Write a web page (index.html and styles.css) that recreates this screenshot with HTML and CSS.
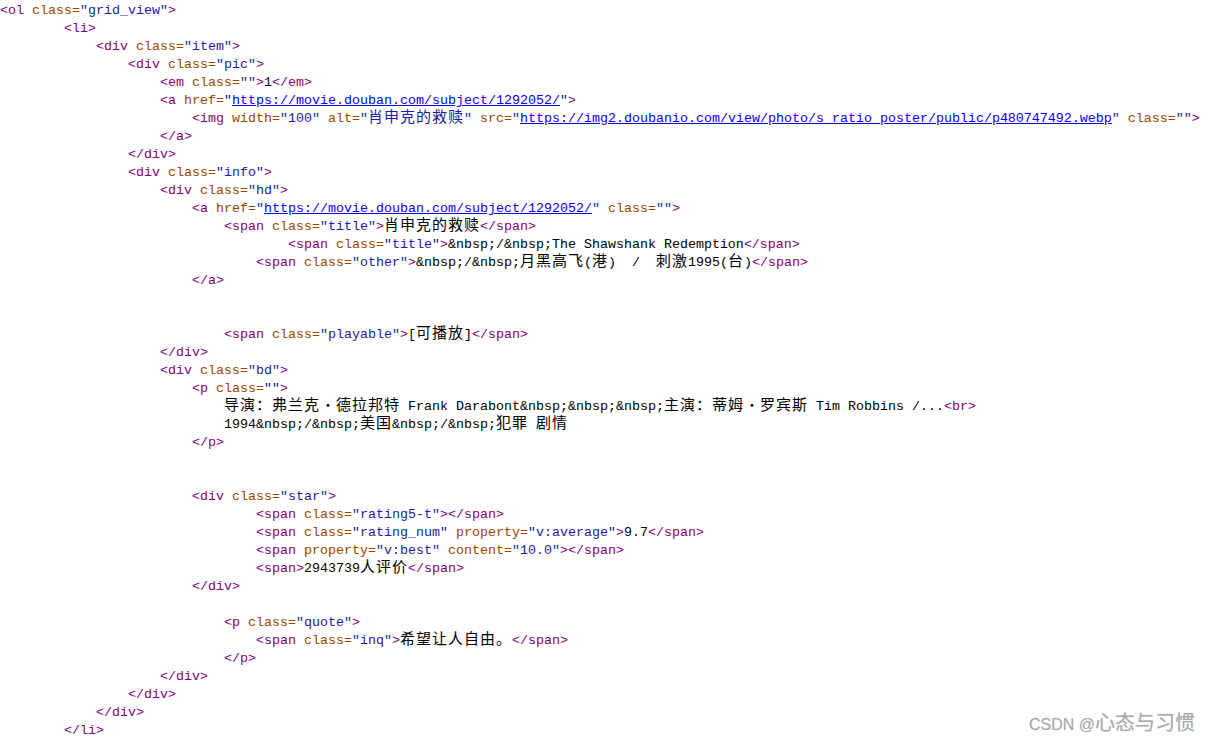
FILE: index.html
```html
<!DOCTYPE html>
<html lang="zh">
<head>
  <meta charset="UTF-8">
  <title>view-source</title>
  <link rel="stylesheet" href="styles.css">
</head>
<body>

<div class="src">
<div class="ln"><span class="t">&lt;ol </span><span class="n">class=</span><span class="v">"grid_view"</span><span class="t">&gt;</span></div>
<div class="ln">        <span class="t">&lt;li&gt;</span></div>
<div class="ln">            <span class="t">&lt;div </span><span class="n">class=</span><span class="v">"item"</span><span class="t">&gt;</span></div>
<div class="ln">                <span class="t">&lt;div </span><span class="n">class=</span><span class="v">"pic"</span><span class="t">&gt;</span></div>
<div class="ln">                    <span class="t">&lt;em </span><span class="n">class=</span><span class="v">""</span><span class="t">&gt;</span>1<span class="t">&lt;/em&gt;</span></div>
<div class="ln">                    <span class="t">&lt;a </span><span class="n">href=</span><span class="v">"<span class="u">https://movie.douban.com/subject/1292052/</span>"</span><span class="t">&gt;</span></div>
<div class="ln">                        <span class="t">&lt;img </span><span class="n">width=</span><span class="v">"100"</span> <span class="n">alt=</span><span class="v">"<span class="w">肖申克的救赎</span>"</span> <span class="n">src=</span><span class="v">"<span class="u">https://img2.doubanio.com/view/photo/s_ratio_poster/public/p480747492.webp</span>"</span> <span class="n">class=</span><span class="v">""</span><span class="t">&gt;</span></div>
<div class="ln">                    <span class="t">&lt;/a&gt;</span></div>
<div class="ln">                <span class="t">&lt;/div&gt;</span></div>
<div class="ln">                <span class="t">&lt;div </span><span class="n">class=</span><span class="v">"info"</span><span class="t">&gt;</span></div>
<div class="ln">                    <span class="t">&lt;div </span><span class="n">class=</span><span class="v">"hd"</span><span class="t">&gt;</span></div>
<div class="ln">                        <span class="t">&lt;a </span><span class="n">href=</span><span class="v">"<span class="u">https://movie.douban.com/subject/1292052/</span>"</span> <span class="n">class=</span><span class="v">""</span><span class="t">&gt;</span></div>
<div class="ln">                            <span class="t">&lt;span </span><span class="n">class=</span><span class="v">"title"</span><span class="t">&gt;</span><span class="w">肖申克的救赎</span><span class="t">&lt;/span&gt;</span></div>
<div class="ln">                                    <span class="t">&lt;span </span><span class="n">class=</span><span class="v">"title"</span><span class="t">&gt;</span>&amp;nbsp;/&amp;nbsp;The Shawshank Redemption<span class="t">&lt;/span&gt;</span></div>
<div class="ln">                                <span class="t">&lt;span </span><span class="n">class=</span><span class="v">"other"</span><span class="t">&gt;</span>&amp;nbsp;/&amp;nbsp;<span class="w">月黑高飞</span>(<span class="w">港</span>)  /  <span class="w">刺激</span>1995(<span class="w">台</span>)<span class="t">&lt;/span&gt;</span></div>
<div class="ln">                        <span class="t">&lt;/a&gt;</span></div>
<div class="ln"> </div>
<div class="ln"> </div>
<div class="ln">                            <span class="t">&lt;span </span><span class="n">class=</span><span class="v">"playable"</span><span class="t">&gt;</span>[<span class="w">可播放</span>]<span class="t">&lt;/span&gt;</span></div>
<div class="ln">                    <span class="t">&lt;/div&gt;</span></div>
<div class="ln">                    <span class="t">&lt;div </span><span class="n">class=</span><span class="v">"bd"</span><span class="t">&gt;</span></div>
<div class="ln">                        <span class="t">&lt;p </span><span class="n">class=</span><span class="v">""</span><span class="t">&gt;</span></div>
<div class="ln">                            <span class="w">导演：弗兰克</span><span class="dot">·</span><span class="w">德拉邦特</span> Frank Darabont&amp;nbsp;&amp;nbsp;&amp;nbsp;<span class="w">主演：蒂姆</span><span class="dot">·</span><span class="w">罗宾斯</span> Tim Robbins /...<span class="t">&lt;br&gt;</span></div>
<div class="ln">                            1994&amp;nbsp;/&amp;nbsp;<span class="w">美国</span>&amp;nbsp;/&amp;nbsp;<span class="w">犯罪</span> <span class="w">剧情</span></div>
<div class="ln">                        <span class="t">&lt;/p&gt;</span></div>
<div class="ln"> </div>
<div class="ln"> </div>
<div class="ln">                        <span class="t">&lt;div </span><span class="n">class=</span><span class="v">"star"</span><span class="t">&gt;</span></div>
<div class="ln">                                <span class="t">&lt;span </span><span class="n">class=</span><span class="v">"rating5-t"</span><span class="t">&gt;&lt;/span&gt;</span></div>
<div class="ln">                                <span class="t">&lt;span </span><span class="n">class=</span><span class="v">"rating_num"</span> <span class="n">property=</span><span class="v">"v:average"</span><span class="t">&gt;</span>9.7<span class="t">&lt;/span&gt;</span></div>
<div class="ln">                                <span class="t">&lt;span </span><span class="n">property=</span><span class="v">"v:best"</span> <span class="n">content=</span><span class="v">"10.0"</span><span class="t">&gt;&lt;/span&gt;</span></div>
<div class="ln">                                <span class="t">&lt;span&gt;</span>2943739<span class="w">人评价</span><span class="t">&lt;/span&gt;</span></div>
<div class="ln">                        <span class="t">&lt;/div&gt;</span></div>
<div class="ln"> </div>
<div class="ln">                            <span class="t">&lt;p </span><span class="n">class=</span><span class="v">"quote"</span><span class="t">&gt;</span></div>
<div class="ln">                                <span class="t">&lt;span </span><span class="n">class=</span><span class="v">"inq"</span><span class="t">&gt;</span><span class="w">希望让人自由。</span><span class="t">&lt;/span&gt;</span></div>
<div class="ln">                            <span class="t">&lt;/p&gt;</span></div>
<div class="ln">                    <span class="t">&lt;/div&gt;</span></div>
<div class="ln">                <span class="t">&lt;/div&gt;</span></div>
<div class="ln">            <span class="t">&lt;/div&gt;</span></div>
<div class="ln">        <span class="t">&lt;/li&gt;</span></div>
</div>

<div class="mark">CSDN @<span class="mark-zh">心态与习惯</span></div>

</body>
</html>
```

FILE: styles.css
```css
body {
  margin: 0;
  background: #fff;
}

.src {
  font-family: "Liberation Mono", monospace;
  font-size: 13.333px;
  line-height: 18px;
  color: #000;
  padding-top: 2px;
}

.ln {
  height: 18px;
  white-space: pre;
}

.t {
  color: #800080;
}

.n {
  color: #994500;
}

.v {
  color: #1a1aa6;
}

.u {
  color: #0000ff;
  text-decoration: underline;
}

.w {
  font-family: "Noto Sans CJK SC", sans-serif;
  font-size: 15px;
  letter-spacing: 1px;
  line-height: 12px;
}

.dot {
  display: inline-block;
  width: 16px;
  text-align: center;
  font-family: "Noto Sans CJK SC", sans-serif;
  line-height: 12px;
}

.mark {
  position: absolute;
  right: 15px;
  top: 707px;
  font-family: "Liberation Sans", "Noto Sans CJK SC", sans-serif;
  font-size: 16px;
  color: #a8a8a8;
  text-shadow: 0 0 1px #ddd;
}

.mark-zh {
  font-size: 20px;
}
```
